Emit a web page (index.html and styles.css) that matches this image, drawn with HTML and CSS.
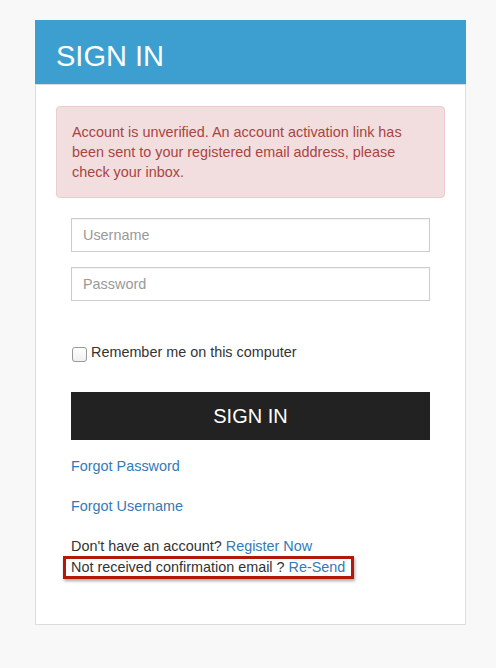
FILE: index.html
```html
<!DOCTYPE html>
<html>
<head>
<meta charset="utf-8">
<link rel="stylesheet" href="styles.css">
</head>
<body>
<div class="card">
  <div class="card-head">SIGN IN</div>
  <div class="card-body">
    <div class="alert">Account is unverified. An account activation link has been sent to your registered email address, please check your inbox.</div>
    <form class="form">
      <input class="field" type="text" placeholder="Username">
      <input class="field" type="password" placeholder="Password">
      <label class="remember"><input class="check" type="checkbox"><span>Remember me on this computer</span></label>
      <button class="submit" type="button">SIGN IN</button>
      <a class="link" href="#">Forgot Password</a>
      <a class="link link-2" href="#">Forgot Username</a>
      <div class="row row-first">Don't have an account? <a class="inline" href="#">Register Now</a></div>
      <div class="row"><div class="mark">Not received confirmation email ? <a class="inline" href="#">Re-Send</a></div></div>
    </form>
  </div>
</div>
</body>
</html>
```

FILE: styles.css
```css
html, body {
  margin: 0;
  padding: 0;
  background: #f8f8f8;
  font-family: "Liberation Sans", Arial, sans-serif;
  font-size: 14.4px;
  line-height: 20px;
  color: #333;
}

.card {
  margin: 20px 0 0 35px;
  width: 429px;
  height: 604px;
  background: #fff;
  border: 1px solid #ddd;
  border-top: none;
}

.card-head {
  margin: 0 -1px;
  height: 65px;
  background: #3c9fd0;
  color: #fff;
  font-size: 29px;
  line-height: 72px;
  padding-left: 21px;
  border-bottom: 1px solid #ddd;
  box-sizing: border-box;
}

.card-body {
  padding: 21px 20px 0 20px;
}

.alert {
  background: #f2dede;
  border: 1px solid #ebccd1;
  border-radius: 4px;
  color: #a94442;
  padding: 15px;
}

.form {
  display: flex;
  flex-direction: column;
  margin: 20px 15px 0 15px;
}

.field {
  height: 34px;
  box-sizing: border-box;
  border: 1px solid #ccc;
  border-radius: 0;
  padding: 0 11px;
  font-family: "Liberation Sans", Arial, sans-serif;
  font-size: 14.4px;
  color: #555;
  margin: 0 0 15px 0;
  outline: none;
  box-shadow: inset 0 1px 1px rgba(0,0,0,0.05);
}

.field::placeholder {
  color: #999;
}

.remember {
  display: flex;
  align-items: flex-start;
  margin-top: 26px;
  line-height: 20px;
}

.check {
  appearance: none;
  -webkit-appearance: none;
  width: 15px;
  height: 15px;
  margin: 5px 4px 0 1px;
  border: 1px solid #999;
  border-radius: 3px;
  background: linear-gradient(#fff, #f0f0f0);
  box-sizing: border-box;
}

.submit {
  margin-top: 30px;
  height: 48px;
  background: #222;
  color: #fff;
  border: none;
  border-radius: 0;
  font-family: "Liberation Sans", Arial, sans-serif;
  font-size: 20px;
  padding-top: 1px;
}

.link {
  color: #337ab7;
  text-decoration: none;
  margin-top: 16px;
  align-self: flex-start;
}

.link-2 {
  margin-top: 20px;
}

.inline {
  color: #337ab7;
  text-decoration: none;
}

.row-first {
  margin-top: 20px;
}

.mark {
  width: fit-content;
  margin: 0 0 0 -8px;
  border: 3px solid #b3190a;
  padding: 0 6px 0 5px;
  line-height: 17px;
  box-shadow: 1px 2px 3px rgba(0,0,0,0.35);
}
```
